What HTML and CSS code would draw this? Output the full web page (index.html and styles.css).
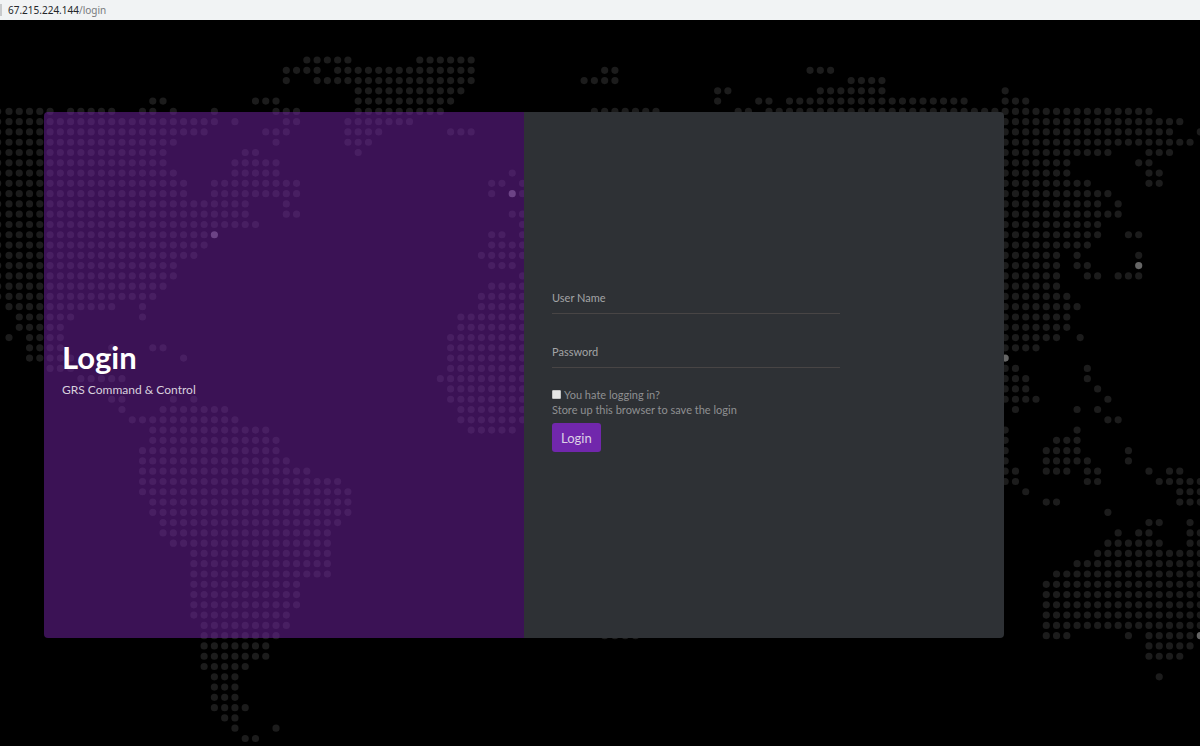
FILE: index.html
```
<!DOCTYPE html>
<html lang="en">
<head>
    <meta charset="UTF-8">
    <meta name="viewport" content="width=device-width, initial-scale=1.0">
    <title>Login</title>
    <link rel="stylesheet" href="styles.css">
</head>
<body>
    <header class="address-bar">
        <span class="address"><span class="host">67.215.224.144</span>/login</span>
    </header>

    <main class="page">
        <!-- dotted world map, one unit per dot -->
        <svg class="map" viewBox="0 0 1200 726" preserveAspectRatio="xMidYMin slice" aria-hidden="true">
            <g transform="translate(9 40) scale(10.27 10.28)">
                <path class="dots" d="
                    M29 0h4.1M40 0h5.1
                    M27 1h3.1M32 1h13.1M58 1h1.1M78 1h2.1
                    M27 2h.1M30 2h15.1M56 2h3.1M82 2h3.1
                    M34 3h10.1M69 3h1.1M79 3h6.1M97 3h.1
                    M14 4h1.1M24 4h2.1M34 4h9.1M69 4h.1M73 4h1.1M76 4h17.1M97 4h2.1
                    M0 5h4.1M6 5h4.1M13 5h1.1M16 5h.1M20 5h.1M26 5h2.1M34 5h8.1M57 5h6.1M71 5h1.1M74 5h37.1
                    M0 6h20.1M22 6h.1M27 6h1.1M33 6h6.1M97 6h17.1
                    M0 7h19.1M25 7h2.1M33 7h3.1M43 7h2.1M97 7h16.1M116 7h.1
                    M0 8h16.1M26 8h.1M33 8h2.1M97 8h18.1
                    M0 9h15.1M23 9h1.1M34 9h.1M97 9h10.1M111 9h2.1
                    M0 10h15.1M22 10h4.1M97 10h6.1M110 10h1.1
                    M0 11h16.1M22 11h4.1M49 11h.1M97 11h6.1M111 11h1.1
                    M0 12h17.1M20 12h8.1M47 12h1.1M50 12h.1M97 12h8.1M111 12h1.1
                    M0 13h17.1M20 13h8.1M47 13h.1M50 13h.1M97 13h10.1
                    M0 14h23.1M27 14h.1M97 14h9.1M108 14h.1
                    M0 15h23.1M27 15h1.1M49 15h1.1M97 15h11.1
                    M0 16h24.1M50 16h.1M97 16h9.1
                    M0 17h19.1M47 17h1.1M50 17h.1M97 17h9.1M109 17h1.1
                    M0 18h19.1M47 18h3.1M97 18h8.1
                    M0 19h18.1M46 19h4.1M97 19h5.1M104 19h.1M110 19h.1
                    M0 20h16.1M47 20h2.1M97 20h5.1M104 20h1.1
                    M0 21h16.1M50 21h.1M97 21h5.1M105 21h1.1M108 21h2.1
                    M0 22h15.1M47 22h3.1M97 22h5.1
                    M0 23h14.1M46 23h4.1M97 23h6.1
                    M0 24h10.1M13 24h.1M46 24h4.1M97 24h7.1
                    M1 25h5.1M13 25h.1M44 25h6.1M97 25h6.1
                    M1 26h4.1M44 26h6.1M97 26h6.1
                    M0 27h.1M2 27h3.1M43 27h7.1M97 27h5.1M104.3 27h.1
                    M2 28h3.1M10 28h.1M14 28h1.1M43 28h7.1M97 28h3.1
                    M2 29h4.1M17 29h.1M43 29h7.1
                    M4 30h2.1M43 30h7.1M97 30h1.1M105 30h.1
                    M7 31h4.1M42 31h8.1M97 31h2.1M105 31h.1
                    M43 32h7.1M97 32h2.1M106 32h.1
                    M10 33h1.1M16 33h.1M18 33h.1M43 33h7.1M97 33h3.1M107 33h.1
                    M11 34h.1M15 34h6.1M44 34h6.1M98 34h.1M104 34h.1M106 34h.1
                    M12 35h10.1M44 35h6.1M107 35h1.1
                    M14 36h11.1M45 36h4.1M97 36h.1M104 36h.1
                    M14 37h12.1M97 37h.1M102 37h2.1
                    M13 38h13.1M97 38h.1M101 38h3.1M109 38h.1
                    M13 39h14.1M97 39h.1M101 39h4.1M109 39h.1
                    M13 40h16.1M97 40h1.1M101 40h2.1M105 40h1.1M111 40h.1M113 40h1.1
                    M13 41h19.1M97 41h1.1M105 41h1.1M112 41h4.1
                    M13 42h20.1M99 42h.1M114 42h2.1
                    M14 43h19.1M101 43h1.1M114 43h2.1
                    M14 44h19.1M107 44h.1
                    M15 45h17.1M111 45h1.1M115 45h.1
                    M15 46h16.1M108 46h.1M110 46h1.1M115 46h1.1
                    M16 47h15.1M107 47h5.1M115 47h1.1
                    M18 48h13.1M106 48h10.1
                    M18 49h13.1M104 49h12.1
                    M18 50h13.1M102 50h14.1
                    M18 51h10.1M101 51h15.1
                    M18 52h10.1M101 52h15.1
                    M18 53h10.1M101 53h15.1
                    M18 54h9.1M101 54h15.1
                    M19 55h8.1M101 55h15.1
                    M19 56h7.1M58 56h3.1M101 56h2.1M109 56h.1M111 56h4.1
                    M19 57h6.1M111 57h4.1
                    M19 58h6.1M111 58h3.1
                    M19 59h4.1
                    M20 60h2.1M112 60h.1
                    M20 61h2.1
                    M20 62h2.1
                    M20 63h3.1
                    M21 64h1.1
                    M22 65h.1M26 65h.1
                    M23 66h1.1"/>
                <!-- column cut off by the left edge -->
                <path class="dots" d="M-1.1 5v18.1"/>
                <path class="dots dots-bright" d="M20 17h.1M49 13h.1M110 20h.1M97 29h.1M116 56h.1"/>
            </g>
        </svg>

        <div class="card">
            <section class="intro">
                <h1 class="title">Login</h1>
                <p class="subtitle">GRS Command &amp; Control</p>
            </section>
            <section class="panel">
                <form class="login-form">
                    <input class="field" type="text" name="username" placeholder="User Name" aria-label="User Name">
                    <input class="field" type="password" name="password" placeholder="Password" aria-label="Password">
                    <div class="remember">
                        <input class="checkbox" type="checkbox" id="remember" name="remember">
                        <label for="remember">You hate logging in?</label>
                    </div>
                    <p class="hint">Store up this browser to save the login</p>
                    <button class="submit" type="submit">Login</button>
                </form>
            </section>
        </div>
    </main>
</body>
</html>
```
FILE: styles.css
```
* {
    box-sizing: border-box;
}
body {
    margin: 0;
    min-height: 100vh;
    display: flex;
    flex-direction: column;
    background-color: #000;
    color: #8f9092;
    font-family: Lato, "Open Sans", sans-serif;
    font-size: 11px;
}
.address-bar {
    height: 20px;
    display: flex;
    align-items: center;
    background-color: #f1f3f4;
    color: #777a7d;
    font-family: "Noto Sans", sans-serif;
    font-size: 10px;
}
.address {
    padding-left: 6px;
    border-left: 2px solid #c8cacc;
    line-height: 12px;
}
.host {
    color: #25272a;
}
.page {
    position: relative;
    flex: 1;
    display: flex;
    padding: 92px 0 108px 44px;
    overflow: hidden;
}
.map {
    position: absolute;
    top: 0;
    left: 0;
    width: 100%;
    height: 100%;
}
.dots {
    fill: none;
    stroke: #1c1c1c;
    stroke-width: 0.7;
    stroke-linecap: round;
    stroke-dasharray: 0 1;
}
.dots-bright {
    stroke: #666;
}
.card {
    position: relative;
    display: flex;
    width: calc((100% + 44px) * 0.8);
    border-radius: 4px;
    overflow: hidden;
}
.intro {
    width: 50%;
    display: flex;
    flex-direction: column;
    justify-content: center;
    padding: 0 18px 12px;
    background-color: rgba(113, 35, 163, 0.52);
}
.title {
    margin: 0 0 6px;
    color: #fff;
    font-size: 31px;
    line-height: 36px;
}
.subtitle {
    margin: 0;
    color: #d8d0dd;
    font-size: 12px;
    line-height: 18px;
}
.panel {
    width: 50%;
    display: flex;
    align-items: center;
    padding: 0 28px 14px;
    background-color: #2e3135;
}
.login-form {
    width: 68%;
}
.field {
    display: block;
    width: 100%;
    height: 30px;
    margin-bottom: 24px;
    padding: 0 0 2px;
    border: none;
    border-bottom: 1px solid #484545;
    background: none;
    color: #ccc;
    font: inherit;
    outline: none;
}
.field::placeholder {
    color: #a3a4a6;
    opacity: 1;
}
.remember {
    display: flex;
    align-items: center;
    gap: 3px;
    margin-top: -5px;
    line-height: 15px;
}
.checkbox {
    appearance: none;
    width: 9px;
    height: 9px;
    margin: 0;
    border: 1px solid #c4c4c4;
    border-radius: 1px;
    background-color: #e6e6e6;
}
.checkbox:checked {
    background-color: #7127ac;
}
.hint {
    margin: 0 0 6px;
    line-height: 15px;
}
.submit {
    height: 29px;
    padding: 0 9px;
    border: none;
    border-radius: 3px;
    background-color: #7127ac;
    color: #dccfe6;
    font: inherit;
    font-size: 13px;
    cursor: pointer;
}
```
